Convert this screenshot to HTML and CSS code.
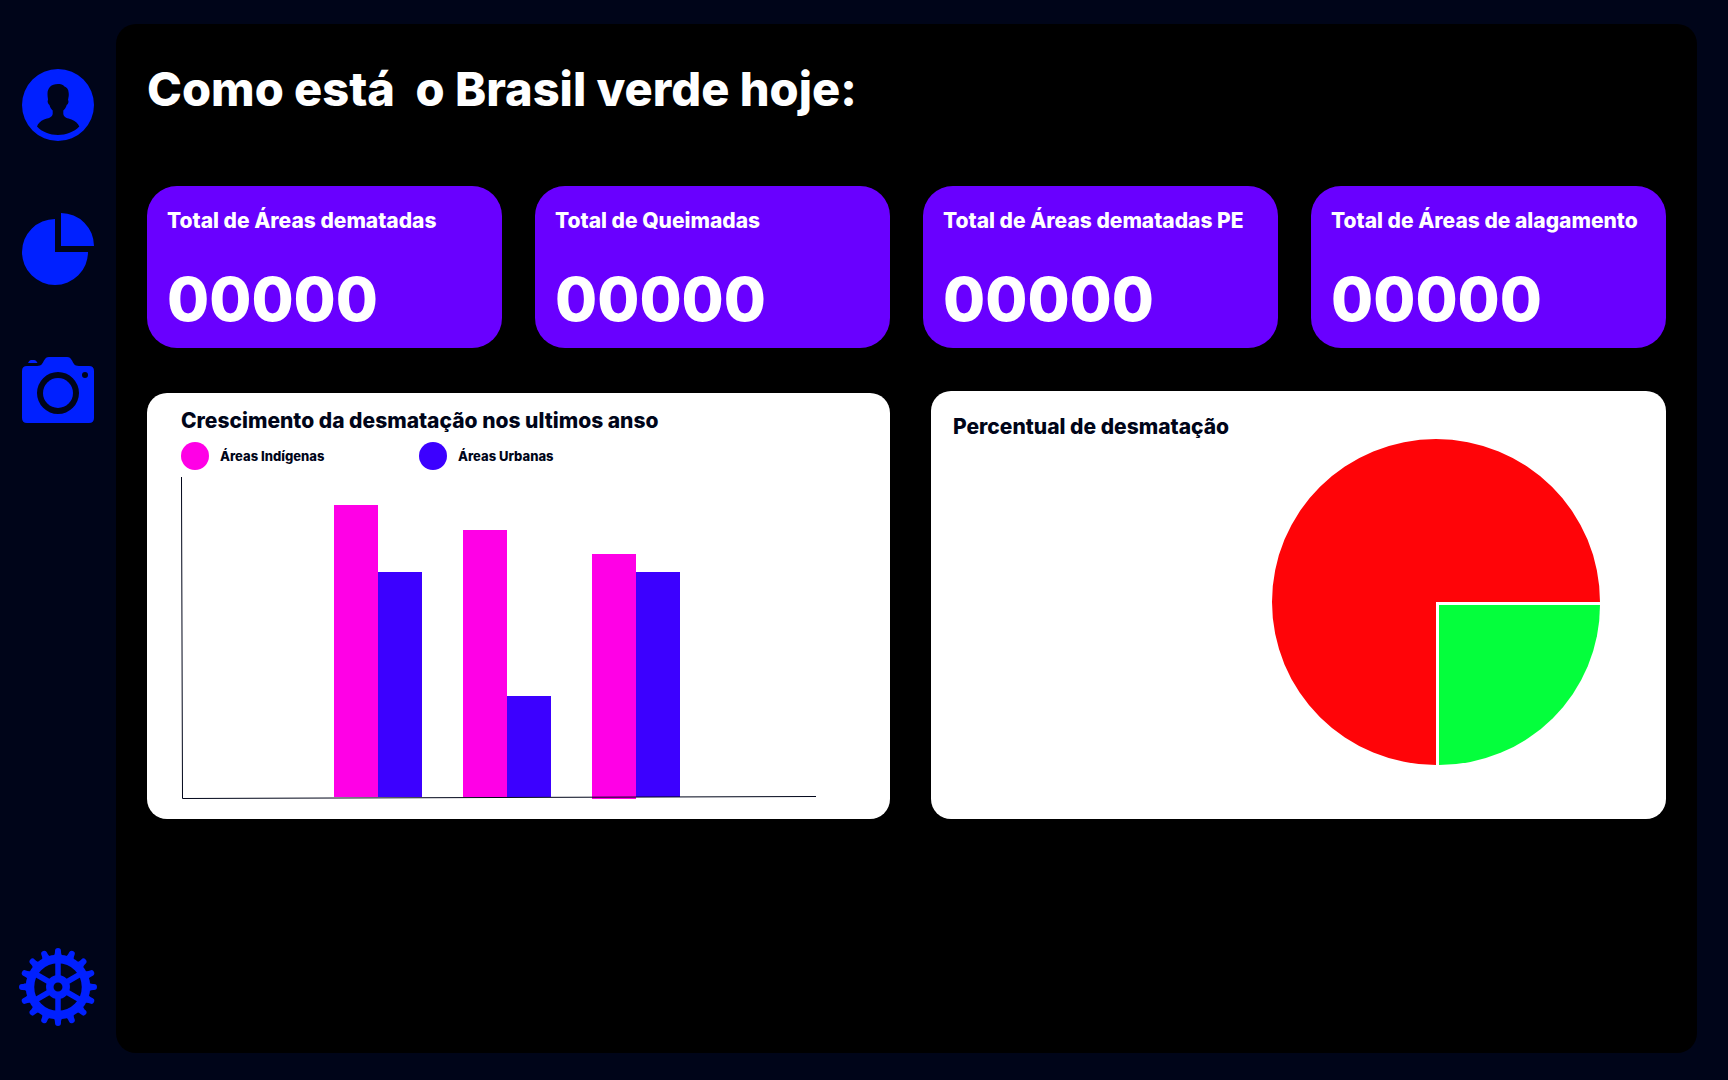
FILE: index.html
```html
<!DOCTYPE html>
<html lang="pt-BR">
<head>
<meta charset="utf-8">
<meta name="viewport" content="width=device-width, initial-scale=1">
<title>Brasil verde</title>
<link rel="stylesheet" href="styles.css">
</head>
<body>
<div class="layout">
  <nav class="sidebar" aria-label="Principal">
    <a class="nav-link" href="#perfil" aria-label="Perfil">
      <svg width="72" height="72" viewBox="0 0 72 72"><path fill="currentColor" fill-rule="evenodd" d="M36 0a36 36 0 1 1 0 72a36 36 0 1 1 0-72ZM36 15C29 15 25.500 19 25.500 25C25.500 28 26 29 26 31C25 32 26 35 27.500 36C28 38.500 29.500 40.500 30.700 41.500V45C30 49 26 49 22 50.500C18.500 52 16 54.500 15 57.500C20 63 28 66 36 66C44 66 52 63 57.300 57.500C56 54 53 52 49.500 50.500C45.500 49 42 49 41.300 45V41.500C42.700 40.500 44 38.500 44.700 36C46.500 35 47 32 46 31C46.500 28 47 27 46.700 24C46.500 20 44.500 18 42.500 17.500C41 15.500 38.500 15 36 15Z"/></svg>
    </a>
    <a class="nav-link" href="#graficos" aria-label="Gráficos">
      <svg width="72" height="72" viewBox="0 0 72 72"><path fill="currentColor" d="M33 6A33 33 0 1 0 66 39H33ZM39 0V33H72A33 33 0 0 0 39 0Z"/></svg>
    </a>
    <a class="nav-link" href="#imagens" aria-label="Imagens">
      <svg width="72" height="66" viewBox="0 0 72 66"><path fill="currentColor" fill-rule="evenodd" d="M5 9H15C20 9 20.500 6 22 3.500C23.500 1 24.500 0 27 0H45C47.500 0 48.500 1 50 3.500C51.500 6 52 9 57 9H67Q72 9 72 14V61Q72 66 67 66H5Q0 66 0 61V14Q0 9 5 9ZM36 15a21 21 0 1 0 0 42a21 21 0 1 0 0-42ZM63 15a3 3 0 1 0 0 6a3 3 0 1 0 0-6Z"/><circle cx="36" cy="36" r="15" fill="currentColor"/><path fill="currentColor" d="M6 6C7 4 8 3 9 3H12C13.500 3 14.500 4 15.500 6Z"/></svg>
    </a>
    <a class="nav-link nav-settings" href="#ajustes" aria-label="Ajustes">
      <svg width="78" height="78" viewBox="-39 -39 78 78">
        <defs><path id="tooth" d="M-7-29.500C-3.500-31-3-33-3-36A3 3 0 0 1 3-36C3-33 3.500-31 7-29.500Z"/></defs>
        <g fill="currentColor">
          <use href="#tooth"/><use href="#tooth" transform="rotate(22.500)"/><use href="#tooth" transform="rotate(45)"/><use href="#tooth" transform="rotate(67.500)"/><use href="#tooth" transform="rotate(90)"/><use href="#tooth" transform="rotate(112.500)"/><use href="#tooth" transform="rotate(135)"/><use href="#tooth" transform="rotate(157.500)"/><use href="#tooth" transform="rotate(180)"/><use href="#tooth" transform="rotate(202.500)"/><use href="#tooth" transform="rotate(225)"/><use href="#tooth" transform="rotate(247.500)"/><use href="#tooth" transform="rotate(270)"/><use href="#tooth" transform="rotate(292.500)"/><use href="#tooth" transform="rotate(315)"/><use href="#tooth" transform="rotate(337.500)"/>
        </g>
        <g fill="none" stroke="currentColor"><circle r="28" stroke-width="8.500"/><circle r="8.200" stroke-width="7.500"/><path stroke-width="5.500" d="M0-10V-26M0 10V26M8.700-5L22.500-13M8.700 5L22.500 13M-8.700-5L-22.500-13M-8.700 5L-22.500 13"/></g>
      </svg>
    </a>
  </nav>
  <main class="board">
    <h1 class="page-title">Como está  o Brasil verde hoje:</h1>
    <section class="stats" aria-label="Totais">
      <article class="stat"><h2 class="stat-title">Total de Áreas dematadas</h2><p class="stat-value">00000</p></article>
      <article class="stat"><h2 class="stat-title">Total de Queimadas</h2><p class="stat-value">00000</p></article>
      <article class="stat"><h2 class="stat-title">Total de Áreas dematadas PE</h2><p class="stat-value">00000</p></article>
      <article class="stat"><h2 class="stat-title">Total de Áreas de alagamento</h2><p class="stat-value">00000</p></article>
    </section>
    <section class="panels" aria-label="Gráficos">
      <article class="panel panel-bars">
        <h2 class="panel-title">Crescimento da desmatação nos ultimos anso</h2>
        <ul class="legend">
          <li class="legend-item"><span class="dot dot-indigenas"></span>Áreas Indígenas</li>
          <li class="legend-item"><span class="dot dot-urbanas"></span>Áreas Urbanas</li>
        </ul>
        <svg class="bar-chart" viewBox="0 0 636 323" role="img" aria-label="Barras por ano">
          <g class="bar-indigenas"><rect x="153" y="28" width="44" height="292"/><rect x="282" y="53" width="44" height="267"/><rect x="411" y="77" width="44" height="245"/></g>
          <g class="bar-urbanas"><rect x="197" y="95" width="44" height="225"/><rect x="326" y="219" width="44" height="101"/><rect x="455" y="95" width="44" height="225"/></g>
          <path class="axis" d="M0.500 0L1.500 321.500L635 319.500"/>
        </svg>
      </article>
      <article class="panel panel-pie">
        <h2 class="panel-title">Percentual de desmatação</h2>
        <svg class="pie-chart" viewBox="0 0 328 326" role="img" aria-label="Setores do percentual">
          <path class="slice-red" d="M164 163H328A164 163 0 1 0 164 326Z"/>
          <path class="slice-green" d="M167 166H328A161 160 0 0 1 167 326Z"/>
        </svg>
      </article>
    </section>
  </main>
</div>
</body>
</html>
```
FILE: styles.css
```css
* {
  box-sizing: border-box;
}

body {
  margin: 0;
  background: #000519;
  color: #fff;
  font-family: Inter, "Open Sans", sans-serif;
  font-weight: 800;
}

h1,
h2,
p,
ul {
  margin: 0;
  padding: 0;
  font-weight: inherit;
}

svg {
  display: block;
}

.layout {
  display: grid;
  grid-template-columns: 116px minmax(0, 1fr);
  min-height: 100vh;
  padding: 24px 31px 27px 0;
}

.sidebar {
  display: flex;
  flex-direction: column;
  align-items: center;
  gap: 72px;
  padding: 45px 0 27px;
}

.nav-link {
  color: #0020ff;
}

.nav-settings {
  margin-top: auto;
}

.board {
  padding: 35px 31px;
  border-radius: 20px;
  background: #000;
}

.page-title {
  font-size: 47px;
  line-height: 60px;
  white-space: pre-wrap;
}

.stats {
  display: grid;
  grid-template-columns: repeat(4, minmax(0, 1fr));
  gap: 33px;
  margin-top: 67px;
}

.stat {
  min-height: 162px;
  padding: 20px 20px 16px;
  border-radius: 30px;
  background: #6900ff;
}

.stat-title {
  font-size: 21px;
  line-height: 30px;
  white-space: nowrap;
}

.stat-value {
  margin-top: 31px;
  font-size: 61px;
  line-height: 64px;
}

.panels {
  display: grid;
  grid-template-columns: 743fr 735fr;
  align-items: end;
  gap: 41px;
  margin-top: 43px;
}

.panel {
  border-radius: 20px;
  background: #fff;
  color: #000519;
}

.panel-title {
  font-size: 21px;
  line-height: 30px;
  white-space: nowrap;
}

.panel-bars {
  padding: 13px 34px 19px;
}

.legend {
  display: flex;
  gap: 90px;
  margin-top: 6px;
  list-style: none;
}

.legend-item {
  display: flex;
  align-items: center;
  gap: 11px;
  min-width: 148px;
  font-size: 13px;
  line-height: 20px;
}

.dot {
  width: 28px;
  height: 28px;
  border-radius: 50%;
}

.dot-indigenas {
  background: #ff00e6;
}

.dot-urbanas {
  background: #3c00ff;
}

.bar-chart {
  width: 100%;
  max-width: 636px;
  margin-top: 7px;
}

.bar-indigenas {
  fill: #ff00e6;
}

.bar-urbanas {
  fill: #3c00ff;
}

.axis {
  fill: none;
  stroke: #000519;
  stroke-width: 1px;
}

.panel-pie {
  display: grid;
  grid-template-columns: auto minmax(0, 328px);
  justify-content: space-between;
  padding: 21px 66px 54px 22px;
}

.pie-chart {
  width: 100%;
  margin-top: 27px;
}

.slice-red {
  fill: #ff0408;
}

.slice-green {
  fill: #04ff3c;
}
```
